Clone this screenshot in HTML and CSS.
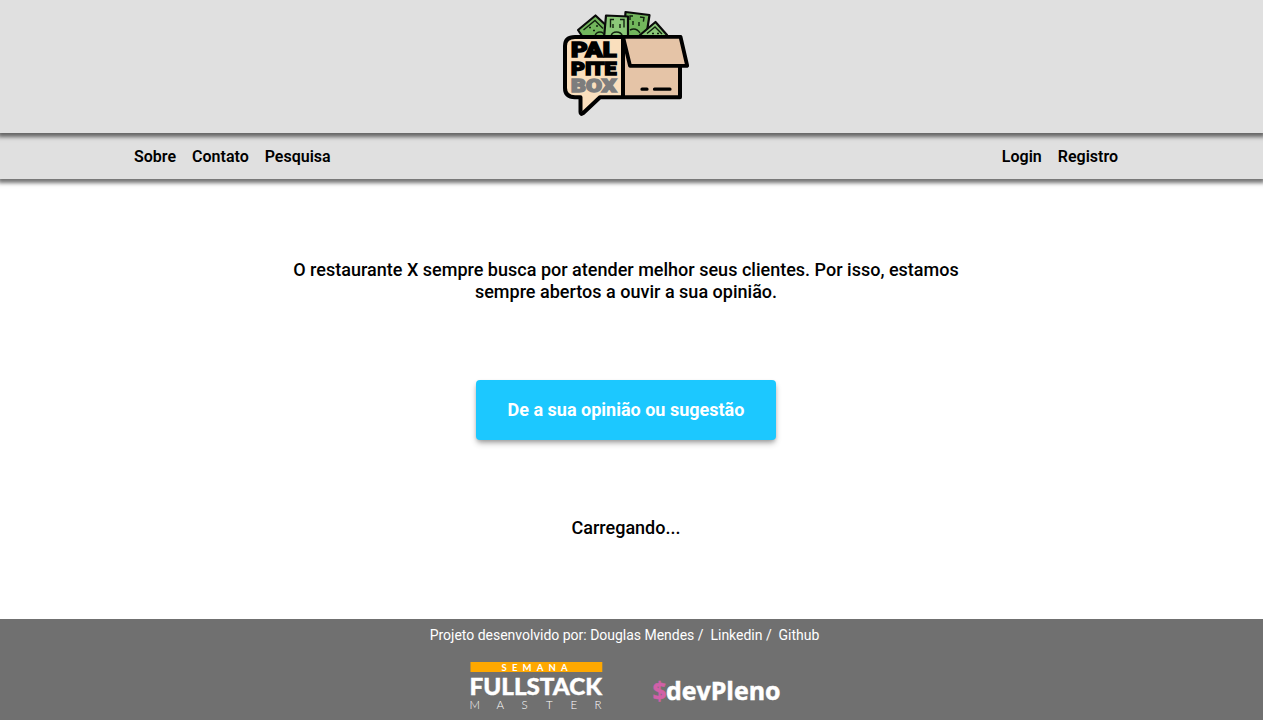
FILE: index.html
```html
<!DOCTYPE html>
<html lang="pt-BR">
<head>
<meta charset="utf-8">
<title>Palpite Box</title>
<link rel="stylesheet" href="styles.css">
</head>
<body>
<header class="header">
  <svg class="logo" viewBox="555 5 140 115" role="img" aria-label="Palpite Box">
    <g stroke="#0a0a0a" stroke-width="2.2" stroke-linejoin="round">
      <path fill="#72b65c" d="M578 30 595.500 15.500 610 29 607 39H584Z"/>
      <path fill="#72b65c" d="M625.500 12 649.500 15 646 38H624Z"/>
      <path fill="#8bc878" d="M606 15.500 628 16.500 628 38H604Z"/>
      <path fill="#8bc878" d="M640 35 655.500 22 667 35V39H642Z"/>
    </g>
    <g fill="none" stroke="#10200e" stroke-width="1.400">
      <path d="M583.500 30 595 20.500 603 28.500M589 27.500h2m2 3h2m1-4.500h2M595 36q1-4 5-4t4 4"/>
      <path d="M610.500 27.500v-8h3.500m6 0h4v8M613 24v4m7-4v4M611 36q1-4 5.500-4t6 4"/>
      <path d="M630 20v-4h3m7 1 4 .6-.6 4M633 21v4m6-3v4M630 30q6-3 10 3"/>
      <path d="M647 33.500l8-6.500 7 7M652 33.500h2m3 0h2"/>
    </g>
    <path fill="#e5c4a7" d="M623 37H680.500V97.500H623Z"/>
    <path fill="#fadfbd" d="M572 37H623V97.500H600L582 113.500Q580.500 114.500 580.500 112V97.500H574Q565 97 565 89V45Q565 37 572 37Z"/>
    <path fill="none" stroke="#000" stroke-width="4" stroke-linejoin="round" d="M680 65V97.300H600L583 113.200Q580.500 115 580.500 112V97.300H575Q565 97 565 88V46Q565 37 575 37H623V97"/>
    <path fill="#e5c4a7" stroke="#000" stroke-width="3.800" stroke-linejoin="round" d="M623 36.800H680.500L687.200 65.800H630Z"/>
    <path fill="none" stroke="#000" stroke-width="3.200" stroke-linecap="round" d="M642 89.200h5M654.500 89.200h15.500"/>
    <g class="logo-text">
      <text class="logo-pal" x="571" y="57.400" textLength="45.500" lengthAdjust="spacingAndGlyphs">PAL</text>
      <text x="571" y="74.800" textLength="45.500" lengthAdjust="spacingAndGlyphs">PITE</text>
      <text class="logo-box" x="571" y="91.600" textLength="45.500" lengthAdjust="spacingAndGlyphs">BOX</text>
    </g>
  </svg>
</header>
<nav class="nav">
  <div class="nav-inner">
    <div class="links"><a>Sobre</a><a>Contato</a><a>Pesquisa</a></div>
    <div class="links"><a>Login</a><a>Registro</a></div>
  </div>
</nav>
<main class="main">
  <p class="intro">O restaurante X sempre busca por atender melhor seus clientes. Por isso, estamos sempre abertos a ouvir a sua opinião.</p>
  <a class="button">De a sua opinião ou sugestão</a>
  <p class="loading">Carregando...</p>
</main>
<footer class="footer">
  <p class="credits">Projeto desenvolvido por: <a>Douglas Mendes</a> / &nbsp;<a>Linkedin</a> / &nbsp;<a>Github</a></p>
  <div class="brands">
    <svg class="fullstack" viewBox="0 0 134 50" role="img" aria-label="Semana Fullstack Master">
      <path fill="#ffa800" d="M.5 0H132.300V10H.5Z"/>
      <text class="semana" x="31.500" y="8.800" textLength="66">SEMANA</text>
      <text class="full" x="-.5" y="33" textLength="132.500" lengthAdjust="spacingAndGlyphs">FULLSTACK</text>
      <text class="master" y="47.200" x="-.5 26.500 51.500 76 100.500 124.500">MASTER</text>
    </svg>
    <svg class="devpleno" viewBox="0 0 130 28" role="img" aria-label="devPleno">
      <text class="dollar" x="-.5" y="20.800" textLength="14" lengthAdjust="spacingAndGlyphs">$</text>
      <text class="dev" x="13" y="20.800" textLength="114.500" lengthAdjust="spacingAndGlyphs">devPleno</text>
    </svg>
  </div>
</footer>
</body>
</html>
```
FILE: styles.css
```css
* { box-sizing: border-box; }
body {
  margin: 0;
  height: 720px;
  display: flex;
  flex-direction: column;
  overflow: hidden;
  background: #fff;
  color: #000;
  font-family: Roboto, sans-serif;
}
p { margin: 0; }
.header, .nav {
  background: #e0e0e0;
  box-shadow: 0 2px 4px 2px rgba(0, 0, 0, .55);
  padding-right: 11px;
  position: relative;
}
.header {
  height: 133px;
  z-index: 2;
  padding: 5px 13px 0 0;
  display: flex;
  justify-content: center;
  align-items: flex-start;
}
.logo { width: 140px; height: 115px; }
.logo-text {
  font: 900 18.500px Roboto, sans-serif;
  stroke: #000;
  stroke-width: 1.500px;
}
.logo-pal { font-size: 20px; }
.logo-box { fill: #7d7d7d; stroke: #7d7d7d; }
.nav { height: 46px; z-index: 1; }
.nav-inner {
  width: 1000px;
  height: 46px;
  margin: 0 auto;
  padding: 0 8px;
  display: flex;
  justify-content: space-between;
  align-items: center;
}
.links { display: flex; gap: 16px; font-size: 16px; font-weight: 600; }
.main {
  flex: 1;
  padding: 80px 11px 0 0;
  display: flex;
  flex-direction: column;
  align-items: center;
  font-size: 18px;
  line-height: 22px;
  font-weight: 500;
}
.intro { width: 700px; text-align: center; letter-spacing: .01px; }
.button {
  width: 300px;
  height: 60px;
  margin: 77px 0;
  border-radius: 4px;
  background: #1cc8ff;
  color: #fff;
  font-weight: 700;
  line-height: 60px;
  text-align: center;
  box-shadow: 0 4px 6px -1px rgba(0, 0, 0, .3), 0 2px 4px -1px rgba(0, 0, 0, .2);
}
.footer {
  height: 101px;
  background: #707070;
  color: #fff;
  padding: 8px 14px 0 0;
}
.credits { font-size: 14px; line-height: 16px; text-align: center; letter-spacing: -.015px; }
.brands {
  display: flex;
  justify-content: center;
  gap: 49px;
  padding: 19px 0 0 3px;
}
.fullstack { width: 134px; height: 50px; }
.devpleno { width: 130px; height: 28px; margin-top: 17px; overflow: visible; }
.semana { font: 700 9.500px Lato, sans-serif; fill: #fff; }
.full { font: 900 23.500px Lato, sans-serif; fill: #fff; stroke: #fff; stroke-width: .4px; }
.master { font: 300 11.500px Lato, sans-serif; fill: #fff; }
.dev, .dollar { font: 700 25px "Open Sans", sans-serif; fill: #fff; stroke: #fff; stroke-width: .5px; }
.dollar { fill: #d160a8; stroke: #d160a8; }
```
